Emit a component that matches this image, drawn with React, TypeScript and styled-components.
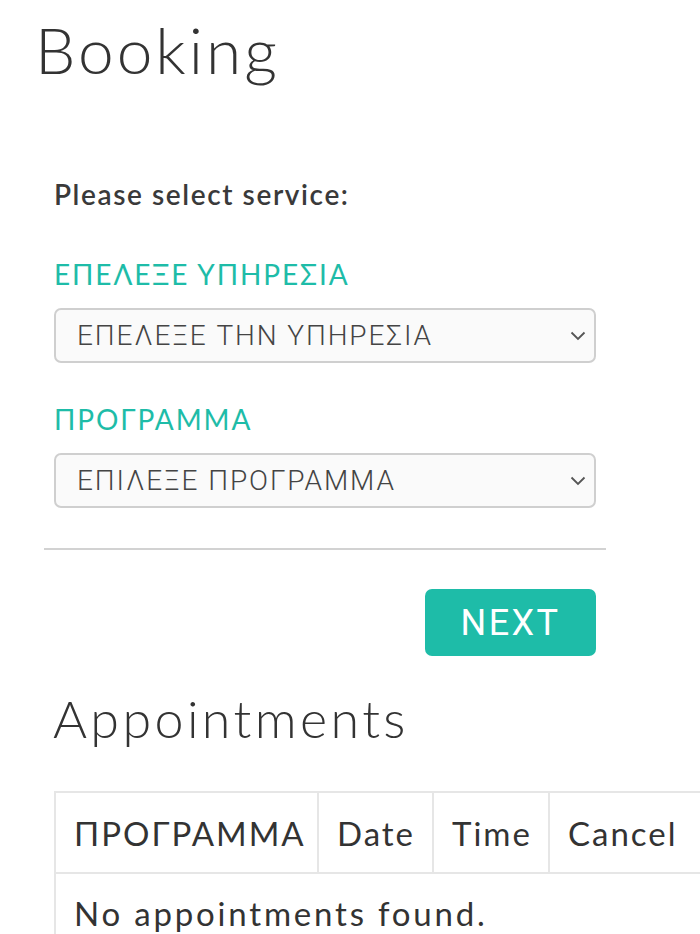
import React from "react";
import styled, { createGlobalStyle } from "styled-components";

const Global = createGlobalStyle`
  html, body { margin: 0; padding: 0; background: #fff; overflow-x: hidden; }
  body { font-family: "Lato", "Noto Sans", sans-serif; color: #333; }
`;

const Page = styled.div`
  display: flex;
  flex-direction: column;
  padding-left: 37px;
  width: 700px;
  box-sizing: border-box;
`;

const Title = styled.h1`
  margin: 8px 0 0 -2px;
  font-family: "Lato", "Noto Sans", sans-serif;
  font-weight: 300;
  font-size: 64px;
  line-height: 84px;
  letter-spacing: 3px;
  color: #333;
`;

const Section = styled.div`
  display: flex;
  flex-direction: column;
  margin-left: 7px;
  width: 562px;
`;

const Form = styled.div`
  display: flex;
  flex-direction: column;
  padding: 0 10px;
  margin-top: 85px;
`;

const Prompt = styled.div`
  font-weight: 600;
  font-size: 28px;
  line-height: 34px;
  letter-spacing: 1.6px;
  color: #3a3a3a;
  margin-bottom: 46px;
`;

const Label = styled.label`
  font-size: 28px;
  line-height: 34px;
  letter-spacing: 1.9px;
  color: #1ebca8;
  margin-bottom: 17px;
`;

const SelectBox = styled.div<{ gap: number }>`
  position: relative;
  height: 55px;
  box-sizing: border-box;
  border: 2px solid #cfcfcf;
  border-radius: 7px;
  background: #fafafa;
  display: flex;
  align-items: center;
  padding: 0 21px;
  margin-bottom: ${(p) => p.gap}px;
  font-family: "Roboto", "Noto Sans", sans-serif;
  font-weight: 300;
  font-size: 28px;
  letter-spacing: 1.9px;
  color: #444;
`;

const Chevron = styled.svg`
  position: absolute;
  right: 8px;
  top: 50%;
  margin-top: -5px;
`;

const Rule = styled.hr`
  margin: 40px 0 0 0;
  border: 0;
  height: 2px;
  background: #d2d2d2;
`;

const ButtonRow = styled.div`
  display: flex;
  justify-content: flex-end;
  padding-right: 10px;
  margin-top: 39px;
`;

const NextButton = styled.button`
  width: 171px;
  height: 67px;
  border: 0;
  border-radius: 7px;
  background: #1ebca8;
  color: #fff;
  font-family: "Roboto", "Noto Sans", sans-serif;
  font-size: 36px;
  font-weight: 400;
  letter-spacing: 2.4px;
  padding: 0;
`;

const SubTitle = styled.h2`
  margin: 27px 0 0 16px;
  font-weight: 300;
  font-size: 52px;
  line-height: 70px;
  letter-spacing: 3.4px;
  color: #333;
`;

const Table = styled.table`
  margin: 38px 0 0 17px;
  border-collapse: collapse;
  border: 2px solid #e6e6e6;
  table-layout: fixed;
  width: 650px;
`;

const Th = styled.th<{ w: number }>`
  width: ${(p) => p.w}px;
  height: 81px;
  box-sizing: border-box;
  border: 2px solid #e6e6e6;
  padding: 0 0 0 18px;
  text-align: left;
  font-weight: 400;
  font-size: 33px;
  letter-spacing: 2px;
  color: #333;
  white-space: nowrap;
  overflow: hidden;
`;

const Td = styled.td`
  border: 2px solid #e6e6e6;
  padding: 19px 18px;
  font-size: 33px;
  letter-spacing: 2.8px;
  color: #333;
  white-space: nowrap;
`;

const Select = ({ text, gap }: { text: string; gap: number }) => (
  <SelectBox gap={gap}>
    {text}
    <Chevron width="16" height="10" viewBox="0 0 16 10">
      <path d="M1.5 1.5 L8 8 L14.5 1.5" fill="none" stroke="#555" strokeWidth="1.8" />
    </Chevron>
  </SelectBox>
);

export default function App() {
  return (
    <>
      <Global />
      <Page>
        <Title>Booking</Title>
        <Section>
          <Form>
            <Prompt>Please select service:</Prompt>
            <Label>ΕΠΕΛΕΞΕ ΥΠΗΡΕΣΙΑ</Label>
            <Select text="ΕΠΕΛΕΞΕ ΤΗΝ ΥΠΗΡΕΣΙΑ" gap={39} />
            <Label>ΠΡΟΓΡΑΜΜΑ</Label>
            <Select text="ΕΠΙΛΕΞΕ ΠΡΟΓΡΑΜΜΑ" gap={0} />
          </Form>
          <Rule />
          <ButtonRow>
            <NextButton>NEXT</NextButton>
          </ButtonRow>
        </Section>
        <SubTitle>Appointments</SubTitle>
        <Table>
          <thead>
            <tr>
              <Th w={263}>ΠΡΟΓΡΑΜΜΑ</Th>
              <Th w={115}>Date</Th>
              <Th w={116}>Time</Th>
              <Th w={156}>Cancel</Th>
            </tr>
          </thead>
          <tbody>
            <tr>
              <Td colSpan={4}>No appointments found.</Td>
            </tr>
          </tbody>
        </Table>
      </Page>
    </>
  );
}
